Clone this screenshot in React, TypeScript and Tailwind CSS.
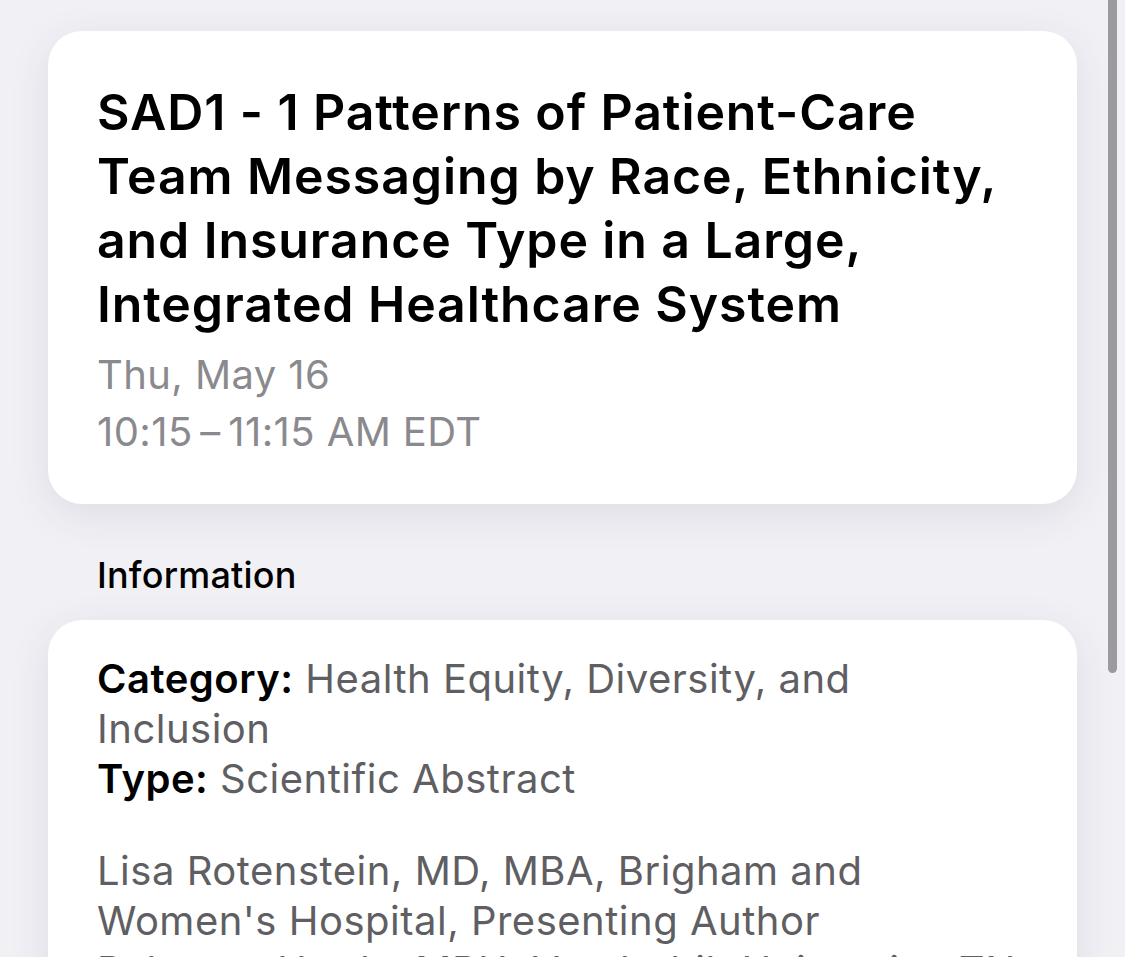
export default function App() {
  return (
    <div
      className="relative h-[957px] overflow-hidden bg-[#f0f0f5] px-[48px] pt-[31px]"
      style={{ fontFamily: "Inter, 'Noto Sans', sans-serif" }}
    >
      {/* Header card */}
      <div className="w-[1029px] rounded-[34px] bg-white px-[49px] pt-[49px] pb-[44px] shadow-[0_10px_40px_rgba(60,60,90,0.10)]">
        <h1 className="text-[50px] leading-[64px] font-semibold tracking-[0.9px] text-black">
          SAD1 - 1 Patterns of Patient-Care
          <br />
          Team Messaging by Race, Ethnicity,
          <br />
          and Insurance Type in a Large,
          <br />
          Integrated Healthcare System
        </h1>
        <div className="mt-[10px] text-[40px] leading-[57px] tracking-[0.4px] text-[#8a8a8e]">
          <div>Thu, May 16</div>
          <div>10:15{"\u2009–\u2009"}11:15 AM EDT</div>
        </div>
      </div>

      {/* Section label */}
      <div className="mt-[49px] px-[49px] text-[36px] leading-[44px] font-medium tracking-[0.2px] text-black">
        Information
      </div>

      {/* Info card */}
      <div className="mt-[23px] w-[1029px] rounded-[34px] bg-white px-[49px] pt-[34px] pb-[40px] shadow-[0_10px_40px_rgba(60,60,90,0.10)]">
        <div className="text-[40px] leading-[50px] tracking-[0.5px] text-[#5f5f63]">
          <p>
            <span className="font-semibold text-black">Category:</span> Health
            Equity, Diversity, and
            <br />
            Inclusion
          </p>
          <p>
            <span className="font-semibold text-black">Type:</span> Scientific
            Abstract
          </p>
          <p className="mt-[42px]">
            Lisa Rotenstein, MD, MBA, Brigham and
            <br />
            Women's Hospital, Presenting Author
          </p>
          <p>Rebecca Hardy, MPH, Vanderbilt University, TN</p>
        </div>
      </div>

      {/* Overlay scrollbar */}
      <div className="absolute right-[8px] top-0 h-[673px] w-[9px] rounded-b-full bg-[#9a9a9f]" />
    </div>
  );
}
